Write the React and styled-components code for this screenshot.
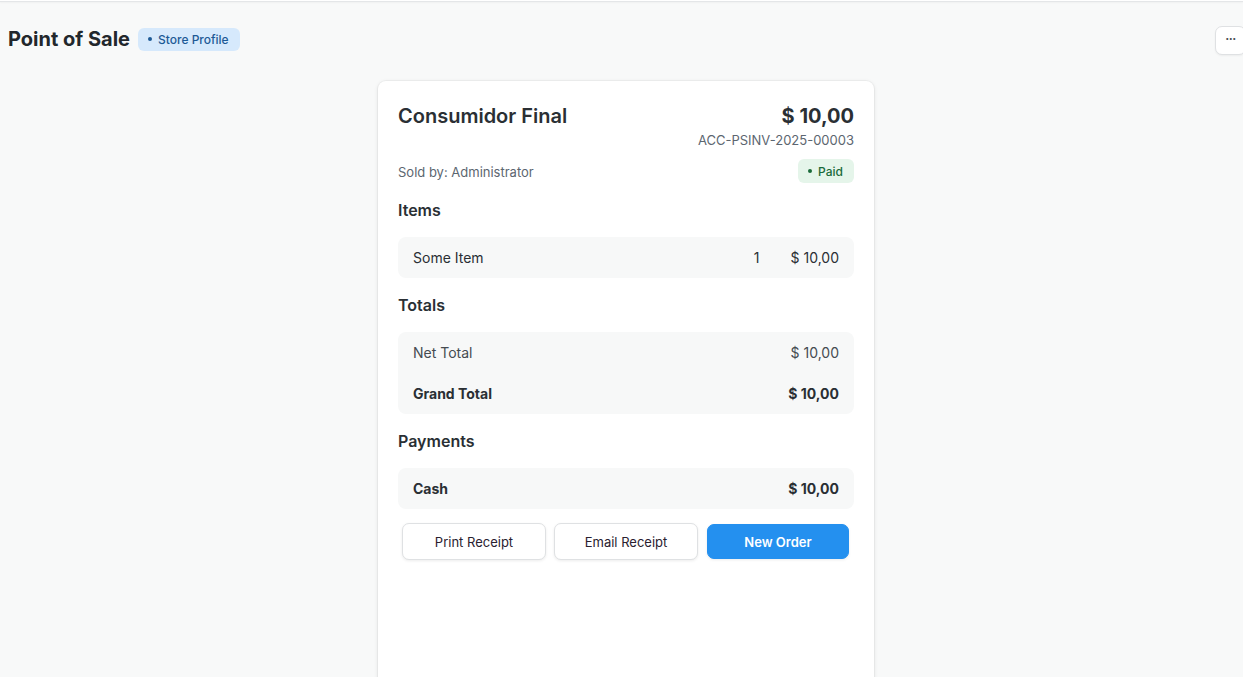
import React from "react";
import styled, { createGlobalStyle } from "styled-components";

const GlobalStyle = createGlobalStyle`
  html, body {
    margin: 0;
    padding: 0;
    background: #f8f9f9;
    overflow: hidden;
  }
  body {
    font-family: Inter, "Noto Sans", sans-serif;
    color: #2a2f34;
  }
  * { box-sizing: border-box; }
`;

const items = [{ name: "Some Item", qty: 1, amount: "$ 10,00" }];

function App() {
    return (
        <>
            <GlobalStyle />
            <Page>
                <TopLine />
                <Header>
                    <TitleGroup>
                        <PageTitle>Point of Sale</PageTitle>
                        <Badge tone="blue">Store Profile</Badge>
                    </TitleGroup>
                    <MoreButton aria-label="More">···</MoreButton>
                </Header>
                <Main>
                    <Card>
                        <CardHead>
                            <CustomerName>Consumidor Final</CustomerName>
                            <HeadRight>
                                <Amount>$ 10,00</Amount>
                                <InvoiceId>ACC-PSINV-2025-00003</InvoiceId>
                            </HeadRight>
                        </CardHead>
                        <MetaRow>
                            <Muted>Sold by: Administrator</Muted>
                            <Badge tone="green">Paid</Badge>
                        </MetaRow>

                        <SectionTitle>Items</SectionTitle>
                        <Box>
                            {items.map((it) => (
                                <Row key={it.name}>
                                    <span>{it.name}</span>
                                    <RowRight>
                                        <span>{it.qty}</span>
                                        <span>{it.amount}</span>
                                    </RowRight>
                                </Row>
                            ))}
                        </Box>

                        <SectionTitle>Totals</SectionTitle>
                        <Box>
                            <Row muted>
                                <span>Net Total</span>
                                <span>$ 10,00</span>
                            </Row>
                            <Row bold>
                                <span>Grand Total</span>
                                <span>$ 10,00</span>
                            </Row>
                        </Box>

                        <SectionTitle>Payments</SectionTitle>
                        <Box>
                            <Row bold>
                                <span>Cash</span>
                                <span>$ 10,00</span>
                            </Row>
                        </Box>

                        <Actions>
                            <ActionButton>Print Receipt</ActionButton>
                            <ActionButton>Email Receipt</ActionButton>
                            <ActionButton primary>New Order</ActionButton>
                        </Actions>
                    </Card>
                </Main>
            </Page>
        </>
    );
}

const Page = styled.div`
    min-height: 677px;
    display: flex;
    flex-direction: column;
`;

const TopLine = styled.div`
    height: 2px;
    background: #ffffff;
    border-bottom: 1px solid #e4e6e8;
    box-shadow: 0 1px 2px rgba(0, 0, 0, 0.04);
`;

const Header = styled.header`
    display: flex;
    align-items: center;
    justify-content: space-between;
    padding: 21px 0 0 8px;
    height: 53px;
`;

const TitleGroup = styled.div`
    display: flex;
    align-items: center;
    gap: 8px;
`;

const PageTitle = styled.h1`
    margin: 0;
    font-size: 20px;
    font-weight: 700;
    color: #22272c;
`;

const Badge = styled.span`
    display: inline-flex;
    align-items: center;
    gap: 6px;
    height: ${(p) => (p.tone === "green" ? "24px" : "23px")};
    padding: 0 11px 0 10px;
    border-radius: 6px;
    font-size: 12px;
    font-weight: 500;
    background: ${(p) => (p.tone === "green" ? "#e5f5ea" : "#d6e9fc")};
    color: ${(p) => (p.tone === "green" ? "#1b6b3a" : "#1d5a96")};

    &::before {
        content: "";
        width: 4px;
        height: 4px;
        border-radius: 50%;
        background: currentColor;
    }
`;

const MoreButton = styled.button`
    width: 31px;
    height: 29px;
    margin-right: -3px;
    margin-top: 2px;
    border: 1px solid #dfe1e3;
    border-radius: 7px;
    background: #ffffff;
    color: #4a4f54;
    font-size: 12px;
    font-weight: 700;
    letter-spacing: -0.5px;
    padding: 0 0 4px;
    font-family: inherit;
    box-shadow: 0 1px 2px rgba(0, 0, 0, 0.05);
`;

const Main = styled.main`
    flex: 1;
    display: flex;
    justify-content: center;
    padding: 26px 0 0 9px;
`;

const Card = styled.section`
    width: 496px;
    min-height: 620px;
    background: #ffffff;
    border-radius: 8px 8px 0 0;
    box-shadow: 0 0 0 1px rgba(0, 0, 0, 0.03), 0 1px 4px rgba(0, 0, 0, 0.1);
    padding: 21px 20px 20px;
    display: flex;
    flex-direction: column;
    gap: 15px;
`;

const CardHead = styled.div`
    display: flex;
    justify-content: space-between;
    align-items: flex-start;
    margin-bottom: -6px;
`;

const CustomerName = styled.h2`
    margin: 0;
    font-size: 20px;
    line-height: 28px;
    font-weight: 600;
    color: #2a2f34;
`;

const HeadRight = styled.div`
    display: flex;
    flex-direction: column;
    align-items: flex-end;
`;

const Amount = styled.div`
    font-size: 20px;
    line-height: 28px;
    font-weight: 700;
    color: #2a2f34;
`;

const InvoiceId = styled.div`
    font-size: 13px;
    line-height: 20px;
    color: #5c6670;
`;

const MetaRow = styled.div`
    display: flex;
    justify-content: space-between;
    align-items: center;
`;

const Muted = styled.span`
    font-size: 13px;
    color: #5c6670;
    padding-top: 2px;
`;

const SectionTitle = styled.h3`
    margin: 0;
    font-size: 16px;
    line-height: 24px;
    font-weight: 600;
    color: #2a2f34;
`;

const Box = styled.div`
    background: #f7f8f8;
    border-radius: 8px;
`;

const Row = styled.div`
    display: flex;
    align-items: center;
    justify-content: space-between;
    height: 41px;
    padding: 0 15px;
    font-size: 14px;
    font-weight: ${(p) => (p.bold ? 700 : 400)};
    color: ${(p) => (p.muted ? "#454b51" : "#2a2f34")};
`;

const RowRight = styled.div`
    display: flex;
    align-items: center;
    gap: 31px;
`;

const Actions = styled.div`
    display: grid;
    grid-template-columns: repeat(3, 1fr);
    gap: 8px;
    margin: -1px 4px 0;
`;

const ActionButton = styled.button`
    height: ${(p) => (p.primary ? "35px" : "37px")};
    margin: ${(p) => (p.primary ? "1px" : "0")};
    border-radius: 7px;
    font-family: inherit;
    font-size: 13px;
    font-weight: ${(p) => (p.primary ? 600 : 400)};
    cursor: pointer;
    border: 1px solid ${(p) => (p.primary ? "#2490ef" : "#dfe1e3")};
    background: ${(p) => (p.primary ? "#2490ef" : "#ffffff")};
    color: ${(p) => (p.primary ? "#ffffff" : "#2a2130")};
    box-shadow: 0 1px 3px rgba(0, 0, 0, 0.08);
`;

export default App;
